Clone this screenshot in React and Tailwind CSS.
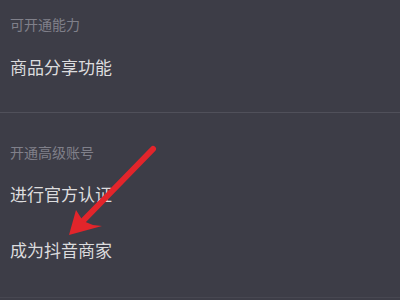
export default function App() {
  const font = { fontFamily: '"Noto Sans CJK SC", "Noto Sans", sans-serif' };
  return (
    <div className="relative w-[400px] h-[300px] overflow-hidden bg-[#3d3d47]" style={font}>
      <div className="flex flex-col">
        <div className="h-[39px] pt-[16px] pl-[10px] text-[14px] leading-[16px] text-[#80808a]">可开通能力</div>
        <div className="h-[56px] flex items-center pl-[10px] text-[17px] text-[#dcdcde]">商品分享功能</div>
        <div className="h-[17px]" />
        <div className="h-[1px] bg-[#50505a]" />
        <div className="h-[53px] pt-[31px] pl-[10px] text-[14px] leading-[16px] text-[#80808a]">开通高级账号</div>
        <div className="h-[56px] flex items-center pl-[10px] text-[17px] text-[#dcdcde]">进行官方认证</div>
        <div className="h-[56px] flex items-center pl-[10px] text-[17px] text-[#dcdcde]">成为抖音商家</div>
        <div className="h-[19px]" />
        <div className="h-[1px] bg-[#474751]" />
      </div>
      <svg className="absolute left-0 top-0" width="400" height="300" viewBox="0 0 400 300">
        <line x1="153" y1="149" x2="78" y2="226" stroke="#e2252b" strokeWidth="6" strokeLinecap="round" />
        <polygon points="69,235 76,210 83,221 93,225 102,226" fill="#e2252b" />
      </svg>
    </div>
  );
}
